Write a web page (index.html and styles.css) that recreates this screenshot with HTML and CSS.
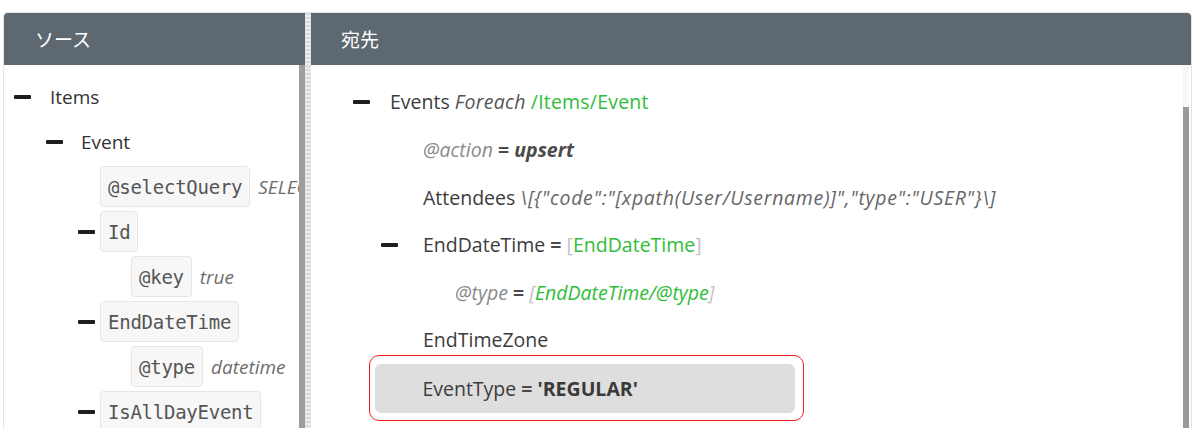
FILE: index.html
```html
<!DOCTYPE html>
<html lang="ja">
<head>
<meta charset="utf-8">
<title>Mapping</title>
<link rel="stylesheet" href="styles.css">
</head>
<body>
<div class="frame">
  <section class="pane pane-src">
    <header class="pane-head">ソース</header>
    <div class="pane-body">
      <div class="tree tree-src">
        <div class="srow lv0"><span class="minus"></span><span class="lbl">Items</span></div>
        <div class="srow lv1"><span class="minus"></span><span class="lbl">Event</span></div>
        <div class="srow lv2"><span class="box">@selectQuery</span><span class="val">SELECT * FROM Events</span></div>
        <div class="srow lv2m"><span class="minus"></span><span class="box">Id</span></div>
        <div class="srow lv3"><span class="box">@key</span><span class="val">true</span></div>
        <div class="srow lv2m"><span class="minus"></span><span class="box">EndDateTime</span></div>
        <div class="srow lv3"><span class="box">@type</span><span class="val">datetime</span></div>
        <div class="srow lv2m"><span class="minus"></span><span class="box">IsAllDayEvent</span></div>
      </div>
      <div class="vscroll vscroll-src"></div>
    </div>
  </section>
  <div class="splitter"></div>
  <section class="pane pane-dst">
    <header class="pane-head">宛先</header>
    <div class="pane-body">
      <div class="tree tree-dst">
        <div class="drow d0"><span class="minus"></span><span class="txt"><span class="lbl">Events</span> <i class="kw">Foreach</i> <span class="green">/Items/Event</span></span></div>
        <div class="drow d1"><span class="txt"><i class="attr">@action</i> <b class="eq">=</b> <b class="bval">upsert</b></span></div>
        <div class="drow d1"><span class="txt"><span class="lbl">Attendees</span> <i class="expr">\[{"code":"[xpath(User/Username)]","type":"USER"}\]</i></span></div>
        <div class="drow d1m"><span class="minus"></span><span class="txt"><span class="lbl">EndDateTime</span> <b class="eq">=</b> <span class="br">[</span><span class="green">EndDateTime</span><span class="br">]</span></span></div>
        <div class="drow d2"><span class="txt"><i class="attr">@type</i> <b class="eq">=</b> <i class="br">[</i><i class="green">EndDateTime/@type</i><i class="br">]</i></span></div>
        <div class="drow d1"><span class="txt"><span class="lbl">EndTimeZone</span></span></div>
        <div class="hl">
          <div class="hl-row"><span class="txt"><span class="lbl">EventType</span> <b class="eq">=</b> <b class="sval">'REGULAR'</b></span></div>
        </div>
      </div>
      <div class="vscroll vscroll-dst"><div class="track"></div><div class="thumb"></div></div>
    </div>
  </section>
</div>
</body>
</html>
```

FILE: styles.css
```css
html, body {
  margin: 0;
  padding: 0;
  background: #ffffff;
  overflow: hidden;
}

body {
  font-family: "Open Sans", "Noto Sans", "Noto Sans CJK JP", sans-serif;
  color: #3f3f3f;
}

.frame {
  margin: 12px 0 0 3px;
  width: 1187px;
  height: 430px;
  border: 1px solid #e2e2e2;
  border-bottom: none;
  border-radius: 5px 5px 0 0;
  display: flex;
  overflow: hidden;
}

.pane {
  display: flex;
  flex-direction: column;
  min-width: 0;
}

.pane-src {
  width: 301px;
  flex: none;
}

.pane-dst {
  flex: 1;
}

.pane-head {
  height: 52px;
  flex: none;
  background: #5d6870;
  color: #ffffff;
  font-family: "Noto Sans CJK JP", "Noto Sans", sans-serif;
  font-size: 19px;
  display: flex;
  align-items: center;
  padding-bottom: 1px;
  box-sizing: border-box;
}

.pane-src .pane-head {
  padding-left: 31px;
}

.pane-dst .pane-head {
  padding-left: 30px;
}

.pane-body {
  flex: 1;
  display: flex;
  min-height: 0;
}

.tree {
  flex: 1;
  min-width: 0;
  overflow: hidden;
  white-space: nowrap;
}

.splitter {
  width: 6px;
  flex: none;
  background: repeating-linear-gradient(180deg, #dcdcdc 0 2px, #ececec 2px 4px);
}

.vscroll {
  width: 6px;
  flex: none;
  display: flex;
  flex-direction: column;
}

.vscroll-src {
  background: #9d9d9d;
}

.vscroll-dst {
  margin-right: 2px;
}

.vscroll-dst .track {
  height: 42px;
  background: #f7f7f7;
}

.vscroll-dst .thumb {
  flex: 1;
  background: #9a9a9a;
}

.minus {
  display: inline-block;
  width: 17px;
  height: 4px;
  border-radius: 1px;
  background: #1e1e1e;
  flex: none;
}

/* source tree */
.tree-src {
  padding-top: 9px;
}

.srow {
  height: 45px;
  display: flex;
  align-items: center;
  font-size: 19px;
}

.srow .lbl {
  color: #333333;
}

.lv0 { padding-left: 10px; }
.lv0 .minus { margin-right: 19px; }
.lv1 { padding-left: 42px; }
.lv1 .minus { margin-right: 18px; }
.lv2 { padding-left: 96px; }
.lv2m { padding-left: 74px; }
.lv2m .minus { margin-right: 5px; }
.lv3 { padding-left: 127px; }

.box {
  height: 41px;
  box-sizing: border-box;
  display: inline-flex;
  align-items: center;
  padding: 0 7px 0 7px;
  border: 1px solid #e6e6e6;
  border-radius: 4px;
  background: #f7f7f7;
  font-family: "DejaVu Sans Mono", "Liberation Mono", monospace;
  font-size: 19px;
  letter-spacing: -0.25px;
  color: #555555;
  flex: none;
}

.val {
  margin-left: 8px;
  font-style: italic;
  color: #6e6e6e;
}

/* destination tree */
.tree-dst {
  padding-top: 13.2px;
}

.drow {
  height: 47.6px;
  display: flex;
  align-items: center;
  font-size: 19.5px;
}

.txt {
  white-space: pre;
  line-height: 1.3;
}

.d0 { padding-left: 42px; }
.d0 .minus { margin-right: 20px; }
.d1 { padding-left: 112px; }
.d1m { padding-left: 70px; }
.d1m .minus { margin-right: 25px; }
.d2 { padding-left: 144px; }

.lbl {
  color: #3c3c3c;
}

.kw {
  color: #555555;
  letter-spacing: 0.3px;
}

.green {
  color: #2fbd3a;
}

.d0 .green {
  letter-spacing: 0.2px;
}

.attr {
  color: #8a8a8a;
}

.eq {
  font-weight: 700;
  color: #4a4a4a;
}

.bval {
  font-style: italic;
  font-weight: 700;
  color: #4a4a4a;
}

.expr {
  font-style: italic;
  color: #666666;
  font-size: 19.5px;
  letter-spacing: 0.7px;
}

.br {
  color: #c2c2c2;
}

.hl {
  margin: -8.8px 0 0 58px;
  width: 435px;
  height: 66px;
  box-sizing: border-box;
  border: 1.6px solid #f21c1c;
  border-radius: 10px;
  padding: 8.4px 8px 7.4px 5.4px;
}

.hl-row {
  height: 100%;
  background: #dedede;
  border-radius: 6px;
  display: flex;
  align-items: center;
  padding-left: 47px;
  font-size: 19.5px;
}

.sval {
  font-weight: 700;
  color: #3a3a3a;
}
```
